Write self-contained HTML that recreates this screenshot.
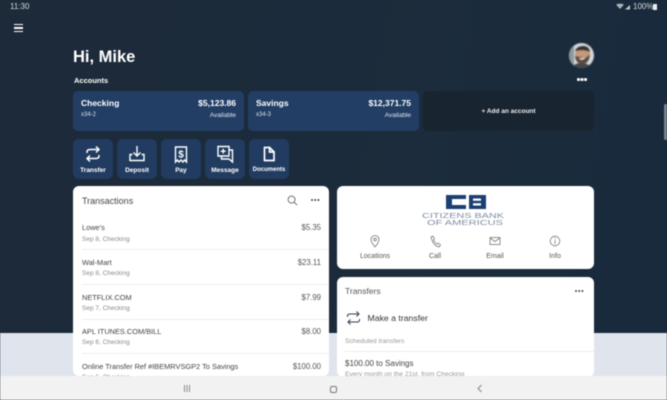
<!DOCTYPE html>
<html><head><meta charset="utf-8">
<style>
*{box-sizing:border-box;margin:0;padding:0}
html,body{width:667px;height:400px;overflow:hidden;background:#1b2a3a;font-family:"Liberation Sans",sans-serif}
#r{position:relative;width:667px;height:400px;overflow:hidden;filter:blur(.45px);background:linear-gradient(100deg,#1c2a39,#1c2c3c 60%,#182a3c)}
.a{position:absolute;white-space:nowrap}
.rt{text-align:right}
.c{position:absolute;background:#fff;border-radius:6px;overflow:hidden}
.acct{position:absolute;top:91px;height:40px;width:171px;background:#223e65;border-radius:5px;color:#fff}
.tile{position:absolute;top:139px;width:40px;height:40px;background:#213c60;border-radius:6px;color:#fff;text-align:center}
.tile span{position:absolute;left:-3px;right:-3px;top:27.500px;font-size:6.500px;font-weight:bold}
.tile svg{position:absolute;left:10px;top:5px}
.n{font-size:7.400px;color:#444;left:9px}
.m{font-size:6.500px;color:#8a8a8a;left:9px}
.p{font-size:7.800px;color:#555;right:8px}
.l{position:absolute;left:9px;right:0;height:1px;background:#eee}
.ql{position:absolute;width:60px;text-align:center;font-size:7px;color:#555}
</style></head><body><div id="r">
<div class="a" style="left:0;top:333px;width:667px;height:43px;background:#e0e4ec"></div>
<div class="a" style="left:10px;top:2px;font-size:8px;color:#d5d9de">11:30</div>
<svg class="a" style="left:615px;top:3px" width="52" height="8" viewBox="0 0 52 8"><path d="M1 1.500Q5 -.2 9 1.500L5 6Z" fill="#aab0b8"/><path d="M10 6.500L15 2V6.500Z" fill="#c5c9cf"/><rect x="38" y="1" width="4" height="6" fill="#eee"/></svg>
<div class="a" style="left:633px;top:2px;font-size:8px;color:#d5d9de">100%</div>
<div class="a" style="left:13.500px;top:24px;width:9px;height:8px;border-top:1.600px solid #fff;border-bottom:1.600px solid #fff"></div>
<div class="a" style="left:13.500px;top:27.200px;width:9px;height:1.600px;background:#fff"></div>
<div class="a" style="left:73px;top:47.500px;font-size:16.500px;font-weight:bold;color:#fff">Hi, Mike</div>
<div class="a" style="left:74px;top:76px;font-size:7.500px;font-weight:bold;color:#fff">Accounts</div>
<svg class="a" style="left:569px;top:43px;filter:blur(.5px)" width="25" height="25" viewBox="0 0 25 25"><defs><clipPath id="av"><circle cx="12.500" cy="12.500" r="12.500"/></clipPath></defs><g clip-path="url(#av)"><rect width="25" height="25" fill="#d3d8da"/><rect x="0" width="5" height="25" fill="#8c9a9c"/><path d="M3 25Q5 20 12 20T24 25Z" fill="#45464a"/><ellipse cx="13.500" cy="12" rx="7.500" ry="8.500" fill="#c49878"/><path d="M6 8Q8 3 14 3T21 9Q15 5.500 6 8Z" fill="#39302b"/><path d="M6 13Q7 21 13.500 21T21 11Q19 15 14 14.500T6 13Z" fill="#5c4a40"/><path d="M9.500 15.500Q13 18.500 17 14.500Z" fill="#f4f0ec"/></g></svg>
<div class="a" style="left:577px;top:78px;width:2.500px;height:2.500px;background:#fff;border-radius:50%;box-shadow:3.500px 0 #fff,7px 0 #fff"></div>

<div class="acct" style="left:73px"><div class="a" style="left:8px;top:7px;font-size:8.500px;font-weight:bold">Checking</div><div class="a" style="left:8px;top:20.500px;font-size:6px;color:#dde3ec">x34-2</div><div class="a rt" style="right:8px;top:7px;font-size:8.500px;font-weight:bold">$5,123.86</div><div class="a rt" style="right:8px;top:20.500px;font-size:6.500px;color:#dde3ec">Available</div></div>
<div class="acct" style="left:248px"><div class="a" style="left:8px;top:7px;font-size:8.500px;font-weight:bold">Savings</div><div class="a" style="left:8px;top:20.500px;font-size:6px;color:#dde3ec">x34-3</div><div class="a rt" style="right:8px;top:7px;font-size:8.500px;font-weight:bold">$12,371.75</div><div class="a rt" style="right:8px;top:20.500px;font-size:6.500px;color:#dde3ec">Available</div></div>
<div class="a" style="left:423px;top:91px;width:171px;height:40px;background:#18242f;border-radius:5px;color:#eee;font-size:6.500px;font-weight:bold;text-align:center;line-height:41px">+ Add an account</div>

<div class="tile" style="left:73px"><svg width="20" height="20" viewBox="0 0 20 20" fill="none" stroke="#fff" stroke-width="1.500"><path d="M4 9V8Q4 5.500 7 5.500H16M13 2.500L16 5.500L13 8.500M16 11V12Q16 14.500 13 14.500H4M7 11.500L4 14.500L7 17.500"/></svg><span>Transfer</span></div>
<div class="tile" style="left:117px"><svg width="20" height="20" viewBox="0 0 20 20" fill="none" stroke="#fff" stroke-width="1.400"><path d="M10 2V12M6.500 8.500L10 12L13.500 8.500M5.500 10.500H3V16.500H17V10.500H14.500"/></svg><span>Deposit</span></div>
<div class="tile" style="left:161px"><svg width="20" height="20" viewBox="0 0 20 20" fill="none" stroke="#fff" stroke-width="1.400"><path d="M4.500 3H15.500V18L13.500 16L12 18L10 16L8 18L6.500 16L4.500 18Z"/><text x="10" y="13.500" font-size="10" font-weight="bold" fill="#fff" stroke="none" text-anchor="middle" font-family="Liberation Sans">$</text></svg><span>Pay</span></div>
<div class="tile" style="left:205px"><svg width="20" height="20" viewBox="0 0 20 20" fill="none" stroke="#fff" stroke-width="1.400"><path d="M3 2.500H14V12H3ZM14 6H17.500V18L14 15H6.500V12M8.200 4.800V9.500M5.800 7.200H10.700"/></svg><span>Message</span></div>
<div class="tile" style="left:249px"><svg width="20" height="20" viewBox="0 0 20 20" fill="none" stroke="#fff" stroke-width="1.700"><path d="M5.500 3.500H10.500V8H15V16.500H5.500ZM10.500 3.500L15 8"/></svg><span style="font-size:6px">Documents</span></div>

<div class="c" style="left:73px;top:186px;width:256px;height:190px">
<div class="a" style="left:9px;top:10px;font-size:9px;color:#444">Transactions</div>
<svg class="a" style="left:214px;top:9px" width="11" height="11" viewBox="0 0 12 12" fill="none" stroke="#666" stroke-width="1"><circle cx="5" cy="5" r="3.800"/><path d="M8 8L11 11"/></svg>
<div class="a" style="left:238px;top:13px;width:2.200px;height:2.200px;background:#444;border-radius:50%;box-shadow:3.200px 0 #444,6.400px 0 #444"></div>
<div class="a n" style="top:37px">Lowe's</div><div class="a m" style="top:50px">Sep 8, Checking</div><div class="a p" style="top:37px">$5.35</div><div class="l" style="top:63px"></div>
<div class="a n" style="top:72px">Wal-Mart</div><div class="a m" style="top:84px">Sep 8, Checking</div><div class="a p" style="top:72px">$23.11</div><div class="l" style="top:98px"></div>
<div class="a n" style="top:106.500px">NETFLIX.COM</div><div class="a m" style="top:119px">Sep 7, Checking</div><div class="a p" style="top:106.500px">$7.99</div><div class="l" style="top:132.500px"></div>
<div class="a n" style="top:141px">APL ITUNES.COM/BILL</div><div class="a m" style="top:153px">Sep 6, Checking</div><div class="a p" style="top:141px">$8.00</div><div class="l" style="top:167px"></div>
<div class="a n" style="top:175.500px">Online Transfer Ref #IBEMRVSGP2 To Savings</div><div class="a m" style="top:188px">Sep 6, Checking</div><div class="a p" style="top:175.500px">$100.00</div>
</div>

<div class="c" style="left:337px;top:186px;width:257px;height:83px">
<svg class="a" style="left:80px;top:5px" width="95" height="40" viewBox="0 0 95 40">
<path d="M29 4H49V8H35V14H49V18H29Z" fill="#1c3f73"/>
<path fill-rule="evenodd" d="M52 4H69V18H52ZM56 7.500V9.800H64V7.500ZM56 12.200V14.500H64V12.200Z" fill="#1c3f73"/>
<text x="5" y="27" font-size="7.500" fill="#7f8ea3" textLength="82" lengthAdjust="spacingAndGlyphs" font-family="Liberation Sans">CITIZENS BANK</text>
<text x="10" y="34" font-size="7.500" fill="#7f8ea3" textLength="76" lengthAdjust="spacingAndGlyphs" font-family="Liberation Sans">OF AMERICUS</text>
</svg>
<svg class="a" style="left:32px;top:49px" width="12" height="13" viewBox="0 0 12 13" fill="none" stroke="#777" stroke-width=".8"><path d="M6 12Q2 7 2 4.500A4 4 0 0 1 10 4.500Q10 7 6 12Z"/><circle cx="6" cy="4.500" r="1.300"/></svg>
<svg class="a" style="left:92px;top:49px" width="12" height="13" viewBox="0 0 12 13" fill="none" stroke="#777" stroke-width=".8"><path d="M2 2L4 1L5.500 4L4.500 5Q6 8 8 9L9 8L11.500 10L10 12Q4 10.500 2 2Z"/></svg>
<svg class="a" style="left:152px;top:50px" width="12" height="10" viewBox="0 0 12 10" fill="none" stroke="#777" stroke-width=".8"><rect x="1" y="1.500" width="10" height="7"/><path d="M1 2L6 5.500L11 2"/></svg>
<svg class="a" style="left:212px;top:49px" width="12" height="12" viewBox="0 0 12 12" fill="none" stroke="#777" stroke-width=".8"><circle cx="6" cy="6" r="4.800"/><path d="M6 5V9M6 3V4"/></svg>
<div class="ql" style="left:8px;top:66.500px">Locations</div>
<div class="ql" style="left:68px;top:66.500px">Call</div>
<div class="ql" style="left:128px;top:66.500px">Email</div>
<div class="ql" style="left:188px;top:66.500px">Info</div>
</div>

<div class="c" style="left:337px;top:277px;width:257px;height:100px">
<div class="a" style="left:8px;top:9px;font-size:8.500px;color:#555">Transfers</div>
<div class="a" style="left:238px;top:13px;width:2.200px;height:2.200px;background:#444;border-radius:50%;box-shadow:3.200px 0 #444,6.400px 0 #444"></div>
<svg class="a" style="left:9px;top:33px" width="15" height="16" viewBox="0 0 15 16" fill="none" stroke="#2f3d50" stroke-width="1"><path d="M1.500 7V6Q1.500 4 4 4H13M10.500 1.500L13 4L10.500 6.500M13.500 9V10Q13.500 12 11 12H2M4.500 9.500L2 12L4.500 14.500"/></svg>
<div class="a" style="left:30.500px;top:36px;font-size:8.700px;color:#333">Make a transfer</div>
<div class="a" style="left:8px;top:61px;font-size:6.700px;color:#999">Scheduled transfers</div>
<div class="l" style="top:74px;left:8px"></div>
<div class="a" style="left:8px;top:82px;font-size:8px;color:#444">$100.00 to Savings</div>
<div class="a" style="left:8px;top:94px;font-size:6.700px;color:#999">Every month on the 21st, from Checking</div>
</div>

<div class="a" style="left:664px;top:104px;width:3px;height:36px;background:#7a838c;border-radius:2px 0 0 2px"></div>
<div class="a" style="left:0;top:376px;width:667px;height:24px;background:#f2f2f2"></div>
<div class="a" style="left:184px;top:385px;width:1px;height:7px;background:#8c8c8c;box-shadow:2.500px 0 #8c8c8c,5px 0 #8c8c8c"></div>
<div class="a" style="left:330px;top:386px;width:7px;height:7px;border:1px solid #777;border-radius:2px"></div>
<svg class="a" style="left:476px;top:384px" width="8" height="9" viewBox="0 0 8 9" fill="none" stroke="#888" stroke-width="1"><path d="M5.500 1L2 4.500L5.500 8"/></svg>
</div></body></html>
